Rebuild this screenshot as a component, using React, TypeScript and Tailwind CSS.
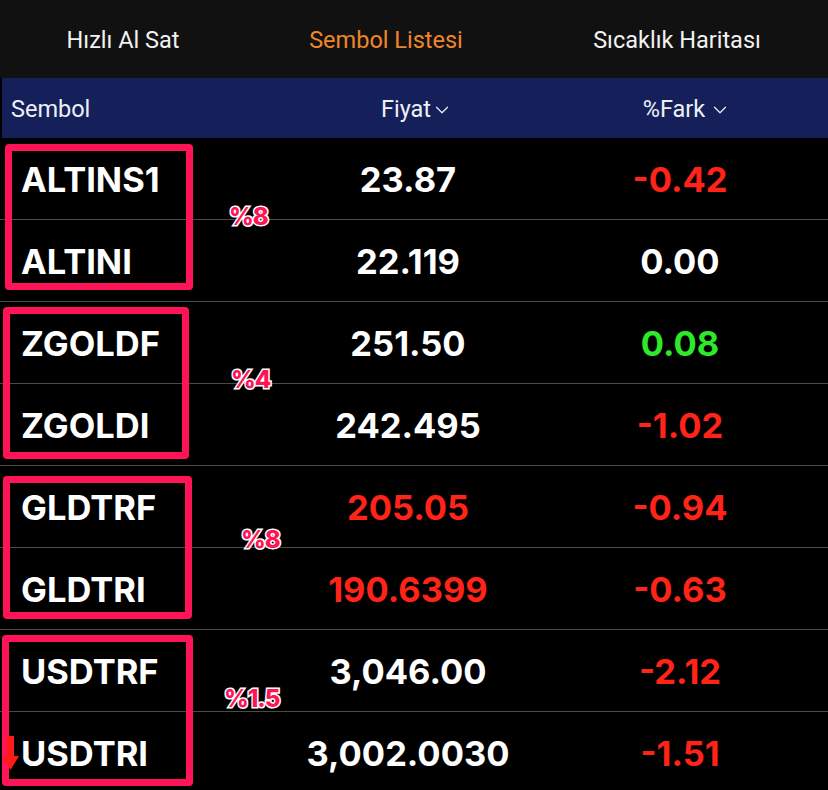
import { ChevronDown } from "lucide-react";

type Row = {
  sym: string;
  price: string;
  priceColor: string;
  diff: string;
  diffColor: string;
};

const rows: Row[] = [
  { sym: "ALTINS1", price: "23.87", priceColor: "text-white", diff: "-0.42", diffColor: "text-[#ff2318]" },
  { sym: "ALTINI", price: "22.119", priceColor: "text-white", diff: "0.00", diffColor: "text-white" },
  { sym: "ZGOLDF", price: "251.50", priceColor: "text-white", diff: "0.08", diffColor: "text-[#2ee82a]" },
  { sym: "ZGOLDI", price: "242.495", priceColor: "text-white", diff: "-1.02", diffColor: "text-[#ff2318]" },
  { sym: "GLDTRF", price: "205.05", priceColor: "text-[#ff2318]", diff: "-0.94", diffColor: "text-[#ff2318]" },
  { sym: "GLDTRI", price: "190.6399", priceColor: "text-[#ff2318]", diff: "-0.63", diffColor: "text-[#ff2318]" },
  { sym: "USDTRF", price: "3,046.00", priceColor: "text-white", diff: "-2.12", diffColor: "text-[#ff2318]" },
  { sym: "USDTRI", price: "3,002.0030", priceColor: "text-white", diff: "-1.51", diffColor: "text-[#ff2318]" },
];

const boxes = [
  { box: "top-[6px] left-[5px] w-[188px] h-[146px]", label: "%8", at: "top-[61px] left-[229px]" },
  { box: "top-[169px] left-[3px] w-[186px] h-[152px]", label: "%4", at: "top-[224px] left-[231px]" },
  { box: "top-[338px] left-[3px] w-[189px] h-[143px]", label: "%8", at: "top-[384px] left-[241px]" },
  { box: "top-[497px] left-[2px] w-[191px] h-[151px]", label: "%1.5", at: "top-[543px] left-[224px]" },
];

const App = () => {
  return (
    <main className="relative h-[790px] w-[828px] overflow-hidden bg-black font-['Inter','Liberation_Sans',sans-serif] text-white">
      <nav className="flex h-[78px] items-center bg-[#111111] pt-[3px] font-['Roboto','Liberation_Sans',sans-serif] text-[23.5px]">
        <div className="w-[246px] text-center text-[#f2f2f2]">Hızlı Al Sat</div>
        <div className="w-[280px] text-center text-[#f0862a]">Sembol Listesi</div>
        <div className="flex-1 text-center text-[#f2f2f2]">Sıcaklık Haritası</div>
      </nav>

      <header className="ml-[2px] grid h-[60px] grid-cols-[270px_276px_1fr] items-center bg-[#15205b] pt-[4px] font-['Roboto','Liberation_Sans',sans-serif] text-[23.5px] text-[#eef0f6]">
        <div className="pl-[9px]">Sembol</div>
        <div className="flex items-center justify-center pl-[14px]">
          Fiyat
          <ChevronDown size={22} strokeWidth={1.3} />
        </div>
        <div className="flex items-center justify-center gap-[4px] pr-[2px]">
          %Fark
          <ChevronDown size={22} strokeWidth={1.3} />
        </div>
      </header>

      <section className="relative">
        {rows.map((r) => (
          <div
            key={r.sym}
            className="grid h-[82px] grid-cols-[272px_272px_268px] items-center border-b border-[#4a4a4a] pt-[3px] text-[34.5px] font-bold"
          >
            <div className="pl-[21px]">{r.sym}</div>
            <div className={`text-center ${r.priceColor}`}>{r.price}</div>
            <div className={`pl-[4px] text-center ${r.diffColor}`}>{r.diff}</div>
          </div>
        ))}

        {boxes.map((b, i) => (
          <div key={i}>
            <div className={`absolute rounded-[4px] border-[7px] border-[#ff1458] ${b.box}`} />
            <span
              className={`absolute text-[24px] font-extrabold tracking-[-1px] text-[#ff1458] [paint-order:stroke] [-webkit-text-stroke:3px_white] ${b.at}`}
            >
              {b.label}
            </span>
          </div>
        ))}

        <svg className="absolute left-[2px] top-[598px]" width="18" height="36" viewBox="0 0 18 36">
          <path d="M5 0 H12 V20 H17 L8.5 34 L0 20 H5 Z" fill="#ff1a1a" />
        </svg>
      </section>
    </main>
  );
};

export default App;
